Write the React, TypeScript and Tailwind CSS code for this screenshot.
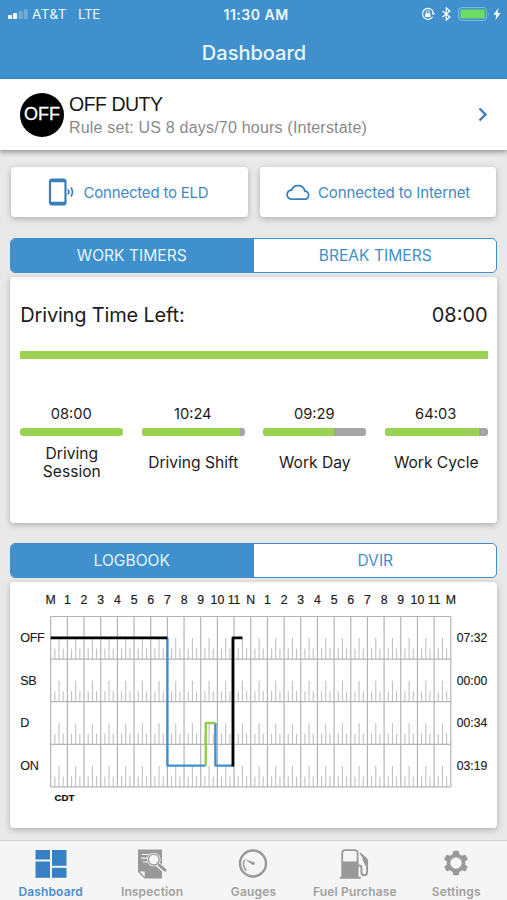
import type { ReactNode } from 'react';

const INTER = "font-['Inter','Liberation_Sans',sans-serif]";
const HELV = "font-['Liberation_Sans',Arial,sans-serif]";

const TIMERS = [
  { time: '08:00', label: 'Driving Session', pct: 100 },
  { time: '10:24', label: 'Driving Shift', pct: 95 },
  { time: '09:29', label: 'Work Day', pct: 68.5 },
  { time: '64:03', label: 'Work Cycle', pct: 92 },
];

const HOURS = ['M', '1', '2', '3', '4', '5', '6', '7', '8', '9', '10', '11', 'N', '1', '2', '3', '4', '5', '6', '7', '8', '9', '10', '11', 'M'];

const DUTY_ROWS = [
  { code: 'OFF', total: '07:32' },
  { code: 'SB', total: '00:00' },
  { code: 'D', total: '00:34' },
  { code: 'ON', total: '03:19' },
];

function StatusBar() {
  return (
    <div className="relative flex h-7 items-center justify-between pl-2 pr-[6px] text-[13.5px] text-[#eef8fd]">
      <div className="flex items-center">
        <svg width="20" height="10" viewBox="0 0 20 10" fill="#fff">
          <rect x="0" y="6" width="4" height="4" rx="1" />
          <rect x="5" y="4" width="4" height="6" rx="1" />
          <rect x="10.5" y="2" width="4" height="8" rx="1" opacity="0.25" />
          <rect x="15.7" y="0" width="4" height="10" rx="1" opacity="0.25" />
        </svg>
        <span className="ml-[4px] tracking-[0.5px]">AT&amp;T</span>
        <span className="ml-[11px] tracking-[-0.4px]">LTE</span>
      </div>
      <span className="absolute left-[223.5px] text-[14px] font-semibold tracking-[0.5px]">11:30 AM</span>
      <div className="flex items-center">
        <svg width="14" height="14" viewBox="0 0 14 14" fill="none" stroke="#fff" strokeWidth="1.2">
          <path d="M11.6 9.8A5.5 5.5 0 1 1 12.4 6" />
          <path d="M10.6 6h3.3l-1.6 2.3z" fill="#fff" stroke="none" />
          <rect x="4.2" y="6.2" width="5.2" height="3.9" rx="0.5" fill="#fff" stroke="none" />
          <path d="M5.3 6.4V5.3a1.5 1.5 0 0 1 3 0v1.1" strokeWidth="1" />
        </svg>
        <svg className="ml-[6px]" width="11" height="14" viewBox="0 0 11 14" fill="none" stroke="#fff" strokeWidth="1.2">
          <path d="M1.5 4l7.4 6L5.3 13V1l3.6 3-7.4 6" />
        </svg>
        <svg className="ml-[6px]" width="32" height="14" viewBox="0 0 32 14">
          <rect x="0.6" y="0.6" width="28" height="12.8" rx="3" fill="none" stroke="#7fbfdc" strokeWidth="1" />
          <rect x="2.4" y="2.4" width="24.4" height="9.2" rx="1.4" fill="#6edb63" />
          <path d="M30.1 4.8q1.7 2.2 0 4.4z" fill="#7fbfdc" />
        </svg>
        <svg className="ml-[3px]" width="8" height="12" viewBox="0 0 8 12" fill="#fff">
          <path d="M5.4 0L0.4 6.8h2.9L2.5 12l5-7H4.6z" />
        </svg>
      </div>
    </div>
  );
}

function Segmented({ left, right }: { left: string; right: string }) {
  return (
    <div className="mx-[10px] flex h-[35px] overflow-hidden rounded-[5px] border border-[#3f90cc] bg-white text-[15.6px] leading-[34px]">
      <div className="w-1/2 bg-[#3f90cc] pr-px text-center text-[#e6f5fd]">{left}</div>
      <div className="w-1/2 pl-px text-center text-[#3f90cc]">{right}</div>
    </div>
  );
}

function Card({ className, children }: { className: string; children: ReactNode }) {
  return (
    <div className={`rounded-[4px] bg-white shadow-[0_2px_6px_rgba(0,0,0,0.25)] ${className}`}>{children}</div>
  );
}

function LogGraph() {
  const x0 = 40.7;
  const y0 = 34.5;
  const hw = 16.67;
  const rh = 42.6;
  const x = (h: number) => x0 + h * hw;
  const mid = (r: number) => y0 + (r + 0.5) * rh;

  return (
    <svg width="487" height="246" viewBox="0 0 487 246" className={`block ${HELV}`}>
      {HOURS.map((h, i) => (
        <text key={i} x={x(i)} y="21.5" textAnchor="middle" fontSize="12.3" fill="#1c1c1c" stroke="#1c1c1c" strokeWidth="0.2">{h}</text>
      ))}
      <g stroke="#c2c2c2" strokeWidth="1.1">
        {DUTY_ROWS.map((_, r) =>
          HOURS.slice(1).map((_h, i) =>
            [1, 2, 3].map(q => {
              const bottom = y0 + (r + 1) * rh;
              return <line key={`${r}-${i}-${q}`} x1={x(i + q / 4)} x2={x(i + q / 4)} y1={bottom - (q === 2 ? 21 : 10.5)} y2={bottom} />;
            })
          )
        )}
      </g>
      <g stroke="#b4b4b4" strokeWidth="1.2">
        {HOURS.map((_, i) => <line key={i} x1={x(i)} x2={x(i)} y1={y0} y2={y0 + 4 * rh} />)}
        {[0, 1, 2, 3, 4].map(r => <line key={r} x1={x0} x2={x(24)} y1={y0 + r * rh} y2={y0 + r * rh} />)}
      </g>
      {DUTY_ROWS.map((row, r) => (
        <g key={row.code} fill="#222" stroke="#222" strokeWidth="0.15">
          <text x="10.3" y={mid(r) + 4.3} fontSize="12.6" letterSpacing="-0.4">{row.code}</text>
          <text x="446.7" y={mid(r) + 4.4} fontSize="12.2">{row.total}</text>
        </g>
      ))}
      <g fill="none" strokeWidth="2.4" strokeLinejoin="round">
        <path d={`M${x(7)} ${mid(0)}V${mid(3)}H${x(9.3)}`} stroke="#3f90cc" />
        <path d={`M${x(9.88)} ${mid(2)}V${mid(3)}H${x(10.93)}`} stroke="#3f90cc" />
        <path d={`M${x(9.3)} ${mid(3)}V${mid(2)}H${x(9.88)}`} stroke="#8fd044" />
        <path d={`M${x0} ${mid(0)}H${x(7)}M${x(10.93)} ${mid(3) + 1}V${mid(0)}H${x(11.5)}`} stroke="#000" strokeWidth="2.7" />
      </g>
      <text x="44.5" y="218.5" fontSize="9.7" fontWeight="bold" fill="#111" stroke="#111" strokeWidth="0.2">CDT</text>
    </svg>
  );
}

function DashboardIcon() {
  return (
    <svg width="32" height="30" viewBox="0 0 32 30" fill="#3880c4">
      <rect x="0.5" y="1" width="14.5" height="9.5" />
      <rect x="0.5" y="12.5" width="14.5" height="16.3" />
      <rect x="17" y="1" width="14.5" height="15.8" />
      <rect x="17" y="18.8" width="14.5" height="10" />
    </svg>
  );
}

function InspectionIcon() {
  return (
    <svg width="32" height="30" viewBox="0 0 32 30">
      <path d="M2 0.5h24V29.5H8.5L2 23z" fill="#999" />
      <path d="M3.5 22.5h5.2v5.4z" fill="#f5f5f5" />
      <path d="M6 5.5h9M5 9.2h8M7 13h6" stroke="#f5f5f5" strokeWidth="1.2" />
      <path d="M22 15.5l7.5 6.5" stroke="#f5f5f5" strokeWidth="5" />
      <circle cx="17.8" cy="10.6" r="6.8" fill="#f5f5f5" />
      <circle cx="17.8" cy="10.6" r="5.4" fill="#f5f5f5" stroke="#999" strokeWidth="1.3" />
      <path d="M21.8 14.8l2 1.8" stroke="#999" strokeWidth="1.5" />
      <path d="M23.5 16.3l5.5 4.9" stroke="#999" strokeWidth="3" strokeLinecap="round" />
    </svg>
  );
}

function GaugeIcon() {
  return (
    <svg width="30" height="30" viewBox="0 0 30 30" fill="none" stroke="#999">
      <circle cx="15" cy="14.5" r="13" strokeWidth="2.4" />
      <path d="M8.6 21.7A9.3 9.3 0 0 1 6.4 11" strokeWidth="1.5" />
      <path d="M6 9.7l9.5 3.6-1.2 2.2z" fill="#999" stroke="none" />
      <circle cx="15.2" cy="14.3" r="1.6" fill="#999" stroke="none" />
    </svg>
  );
}

function FuelIcon() {
  return (
    <svg width="32" height="30" viewBox="0 0 32 30" fill="none" stroke="#999">
      <path d="M3.2 28V4q0-2.8 2.8-2.8h9.8q2.8 0 2.8 2.8v24" strokeWidth="1.8" />
      <path d="M3 12.5h15.8V28H3z" fill="#999" stroke="none" />
      <path d="M0.8 28.8h21" strokeWidth="2" />
      <path d="M19 16.5h1.4q2 0 2 2v4.8q0 3 2.8 3t2.9-3V11.5" strokeWidth="1.9" />
      <path d="M21.3 3.5l6.2 5.2q1.5 1.3 1.5 3.3v5h-2.2l-3.2-6V8.4L20.5 4.8z" fill="#999" stroke="none" />
    </svg>
  );
}

function GearIcon() {
  return (
    <svg width="26" height="30" viewBox="-13 -14 26 30" fill="#999">
      {[0, 60, 120].map(a => (
        <rect key={a} x="-3.1" y="-12.3" width="6.2" height="24.6" rx="1.6" transform={`rotate(${a})`} />
      ))}
      <circle r="9.4" />
      <circle r="5.7" fill="#f5f5f5" />
    </svg>
  );
}

const TABS = [
  { label: 'Dashboard', icon: <DashboardIcon />, active: true },
  { label: 'Inspection', icon: <InspectionIcon />, active: false },
  { label: 'Gauges', icon: <GaugeIcon />, active: false },
  { label: 'Fuel Purchase', icon: <FuelIcon />, active: false },
  { label: 'Settings', icon: <GearIcon />, active: false },
];

export default function App() {
  return (
    <div className={`flex h-[900px] w-[507px] flex-col overflow-hidden bg-[#e9e9e9] ${INTER}`}>
      <header className="h-[79px] flex-shrink-0 bg-[#3f90cc]">
        <StatusBar />
        <h1 className="mt-[9px] pl-px text-center text-[20px] font-medium leading-8 text-[#e9f7fd]">Dashboard</h1>
      </header>

      <section className={`flex h-[71px] flex-shrink-0 items-center bg-white pl-5 pr-[18px] shadow-[0_2px_5px_rgba(0,0,0,0.4)] ${HELV}`}>
        <div className="flex h-11 w-11 items-center justify-center rounded-full bg-black text-[18px] text-white [-webkit-text-stroke:0.3px_white]">OFF</div>
        <div className="ml-[5px] flex-1">
          <p className="text-[19.5px] leading-[25px] tracking-[-0.5px] text-[#1a1a1a]">OFF DUTY</p>
          <p className="text-[16px] leading-[21px] tracking-[0.2px] text-[#8a8a8a]">Rule set: US 8 days/70 hours (Interstate)</p>
        </div>
        <svg width="12" height="16" viewBox="0 0 12 16" fill="none" stroke="#3a7ab8" strokeWidth="2.3">
          <path d="M2.5 1.5l6 6-6 6" />
        </svg>
      </section>

      <div className="mx-[11px] mt-[17px] flex gap-3 text-[15px] text-[#4189c5]">
        <Card className="flex h-[50px] w-[237px] items-center pl-[37px]">
          <svg width="27" height="28" viewBox="0 0 27 28" fill="none" stroke="#3a7fbd">
            <rect x="2" y="1.5" width="15.5" height="25" rx="2" strokeWidth="2.2" />
            <path d="M2 3h15.5M2 25h15.5" strokeWidth="2.6" />
            <path d="M20 11.5q1.8 2.5 0 5M23 9.5q3 4.5 0 9" strokeWidth="1.7" />
          </svg>
          <span className="ml-[8.5px] pt-[2px] tracking-[-0.2px]">Connected to ELD</span>
        </Card>
        <Card className="flex h-[50px] w-[237px] items-center pl-[26px]">
          <svg width="24" height="18" viewBox="0 0 24 18" fill="none" stroke="#3a7fbd" strokeWidth="1.8">
            <path d="M5.8 16.2h12.4a4.1 4.1 0 0 0 .6-8.2A6.9 6.9 0 0 0 5.6 7a4.6 4.6 0 0 0 .2 9.2z" />
          </svg>
          <span className="ml-[8.5px] pt-[2px] tracking-[-0.12px]">Connected to Internet</span>
        </Card>
      </div>

      <div className="mt-[21px]">
        <Segmented left="WORK TIMERS" right="BREAK TIMERS" />
      </div>
      <Card className="mx-[10px] mt-1 h-[246px] pl-[10.3px] pr-[9.3px] text-[#1c1c1c]">
        <div className="flex justify-between pt-[23px] text-[20px] leading-[30px]">
          <span className="tracking-[-0.18px]">Driving Time Left:</span>
          <span>08:00</span>
        </div>
        <div className="mt-[21px] h-2 rounded-[1px] bg-[#9bd252]" />
        <div className="mt-[45px] flex justify-between">
          {TIMERS.map(t => (
            <div key={t.label} className="w-[103px] text-center">
              <p className="pr-px text-[14.7px] leading-5">{t.time}</p>
              <div className="mt-[4px] h-2 overflow-hidden rounded-[3px] bg-[#a5a5a5]">
                <div className="h-full bg-[#9bd252]" style={{ width: `${t.pct}%` }} />
              </div>
              <p className="mx-auto mt-2 flex h-[38px] items-center justify-center text-[15.6px] leading-[18.5px]">{t.label}</p>
            </div>
          ))}
        </div>
      </Card>

      <div className="mt-5">
        <Segmented left="LOGBOOK" right="DVIR" />
      </div>
      <Card className="mx-[10px] mt-1 h-[246px]">
        <LogGraph />
      </Card>

      <nav className="mt-auto flex h-[60px] flex-shrink-0 border-t border-[#cfcfcf] bg-[#f5f5f5]">
        {TABS.map(t => (
          <div key={t.label} className={`flex w-1/5 flex-col items-center pt-[7px] text-[12px] font-semibold tracking-[0.15px] ${t.active ? 'text-[#4a8dca]' : 'text-[#a0a0a0]'}`}>
            <div className="flex h-[31px] items-center">{t.icon}</div>
            <span className="mt-[5px] whitespace-nowrap leading-4">{t.label}</span>
          </div>
        ))}
      </nav>
    </div>
  );
}
